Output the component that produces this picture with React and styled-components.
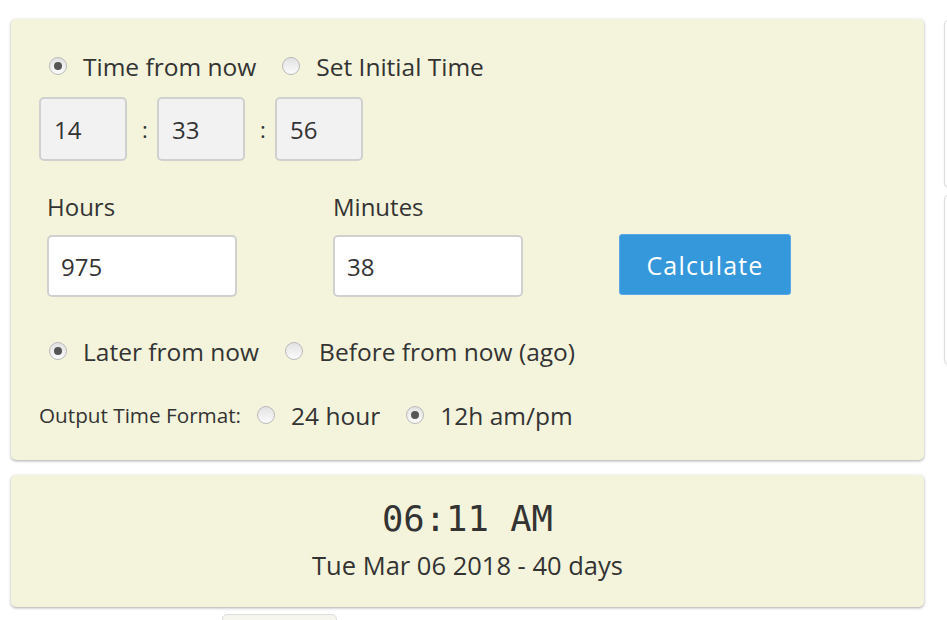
import styled, { createGlobalStyle } from 'styled-components';

const GlobalStyle = createGlobalStyle`
  body {
    margin: 0;
    background: #fff;
    font-family: "Open Sans", "Noto Sans", sans-serif;
    color: #333;
    overflow: hidden;
  }
`;

const Page = styled.div`
  display: flex;
  align-items: flex-start;
  padding: 19px 0 0 11px;
  width: 947px;
  height: 620px;
  box-sizing: border-box;
  overflow: hidden;
`;

const Main = styled.div`
  width: 913px;
  flex-shrink: 0;
`;

const Side = styled.div`
  margin-left: 20px;
  padding-top: 1px;
  display: flex;
  flex-direction: column;
  gap: 8px;
  flex-shrink: 0;
`;

const SidePanel = styled.div`
  width: 40px;
  height: ${(p) => p.h}px;
  background: #fff;
  border: 1px solid #ddd;
  border-radius: 4px;
  box-shadow: 0 1px 2px rgba(0, 0, 0, 0.08);
`;

const Card = styled.div`
  background: #f4f4dc;
  border-radius: 5px;
  box-shadow: 0 1px 3px rgba(0, 0, 0, 0.35);
`;

const FormCard = styled(Card)`
  padding: 32px 28px 30px 28px;
`;

const ResultCard = styled(Card)`
  margin-top: 15px;
  padding: 22px 0 27px;
  text-align: center;
`;

const RadioRow = styled.div`
  display: flex;
  align-items: center;
  height: 30px;
  margin-top: ${(p) => p.mt || 0}px;
  margin-left: ${(p) => p.ml || 0}px;
`;

const Option = styled.label`
  display: flex;
  align-items: center;
  font-size: 24.5px;
  margin-right: ${(p) => p.mr || 0}px;
`;

const Radio = styled.span`
  width: 16px;
  height: 16px;
  border-radius: 50%;
  border: 1px solid #b9b9b9;
  background: linear-gradient(#e2e2e2, #fbfbfb);
  margin-right: 16px;
  display: flex;
  align-items: center;
  justify-content: center;
  flex-shrink: 0;

  &::after {
    content: '';
    display: ${(p) => (p.checked ? 'block' : 'none')};
    width: 8px;
    height: 8px;
    border-radius: 50%;
    background: #555;
  }
`;

const FormatLabel = styled.span`
  font-size: 20.7px;
  margin-right: 16px;
`;

const TimeRow = styled.div`
  display: flex;
  align-items: center;
  margin-top: 16px;
`;

const TimeBox = styled.div`
  width: 88px;
  height: 64px;
  box-sizing: border-box;
  background: #f2f2f2;
  border: 2px solid #d0d0d0;
  border-radius: 5px;
  padding-left: 13px;
  display: flex;
  align-items: center;
  font-size: 24px;
`;

const Colon = styled.span`
  width: 30px;
  padding-left: 6px;
  box-sizing: border-box;
  text-align: center;
  font-size: 22px;
`;

const FieldRow = styled.div`
  display: flex;
  align-items: flex-end;
  gap: 96px;
  margin: 31px 0 0 8px;
`;

const Field = styled.div`
  display: flex;
  flex-direction: column;
`;

const FieldLabel = styled.span`
  font-size: 24px;
  line-height: 30px;
  margin-bottom: 13px;
`;

const NumBox = styled.div`
  width: 190px;
  height: 62px;
  box-sizing: border-box;
  background: #fff;
  border: 2px solid #d0d0d0;
  border-radius: 5px;
  padding-left: 12px;
  display: flex;
  align-items: center;
  font-size: 24px;
`;

const CalcButton = styled.button`
  width: 172px;
  height: 61px;
  margin-bottom: 2px;
  background: #3498db;
  border: 1px solid #5aa8e8;
  border-radius: 3px;
  color: #fff;
  font-family: inherit;
  font-size: 25px;
  letter-spacing: 1.2px;
`;

const TimeText = styled.div`
  font-family: "DejaVu Sans Mono", "Liberation Mono", monospace;
  font-size: 35.5px;
  line-height: 44px;
  color: #333;
`;

const DateText = styled.div`
  font-size: 25.5px;
  line-height: 30px;
  margin-top: 9px;
`;

const NextButton = styled.div`
  margin: 7px 0 0 211px;
  width: 113px;
  height: 20px;
  background: #f6f6ee;
  border: 1px solid #ddd;
  border-radius: 5px;
`;

export default function App() {
  return (
    <>
      <GlobalStyle />
      <Page>
        <Main>
          <FormCard>
            <RadioRow ml={10}>
              <Option mr={26}><Radio checked />Time from now</Option>
              <Option><Radio />Set Initial Time</Option>
            </RadioRow>
            <TimeRow>
              <TimeBox>14</TimeBox>
              <Colon>:</Colon>
              <TimeBox>33</TimeBox>
              <Colon>:</Colon>
              <TimeBox>56</TimeBox>
            </TimeRow>
            <FieldRow>
              <Field>
                <FieldLabel>Hours</FieldLabel>
                <NumBox>975</NumBox>
              </Field>
              <Field>
                <FieldLabel>Minutes</FieldLabel>
                <NumBox>38</NumBox>
              </Field>
              <CalcButton>Calculate</CalcButton>
            </FieldRow>
            <RadioRow ml={10} mt={39}>
              <Option mr={26}><Radio checked />Later from now</Option>
              <Option><Radio />Before from now (ago)</Option>
            </RadioRow>
            <RadioRow mt={34}>
              <FormatLabel>Output Time Format:</FormatLabel>
              <Option mr={26}><Radio />24 hour</Option>
              <Option><Radio checked />12h am/pm</Option>
            </RadioRow>
          </FormCard>
          <ResultCard>
            <TimeText>06:11 AM</TimeText>
            <DateText>Tue Mar 06 2018 - 40 days</DateText>
          </ResultCard>
          <NextButton />
        </Main>
        <Side>
          <SidePanel h={165} />
          <SidePanel h={167} />
        </Side>
      </Page>
    </>
  );
}
